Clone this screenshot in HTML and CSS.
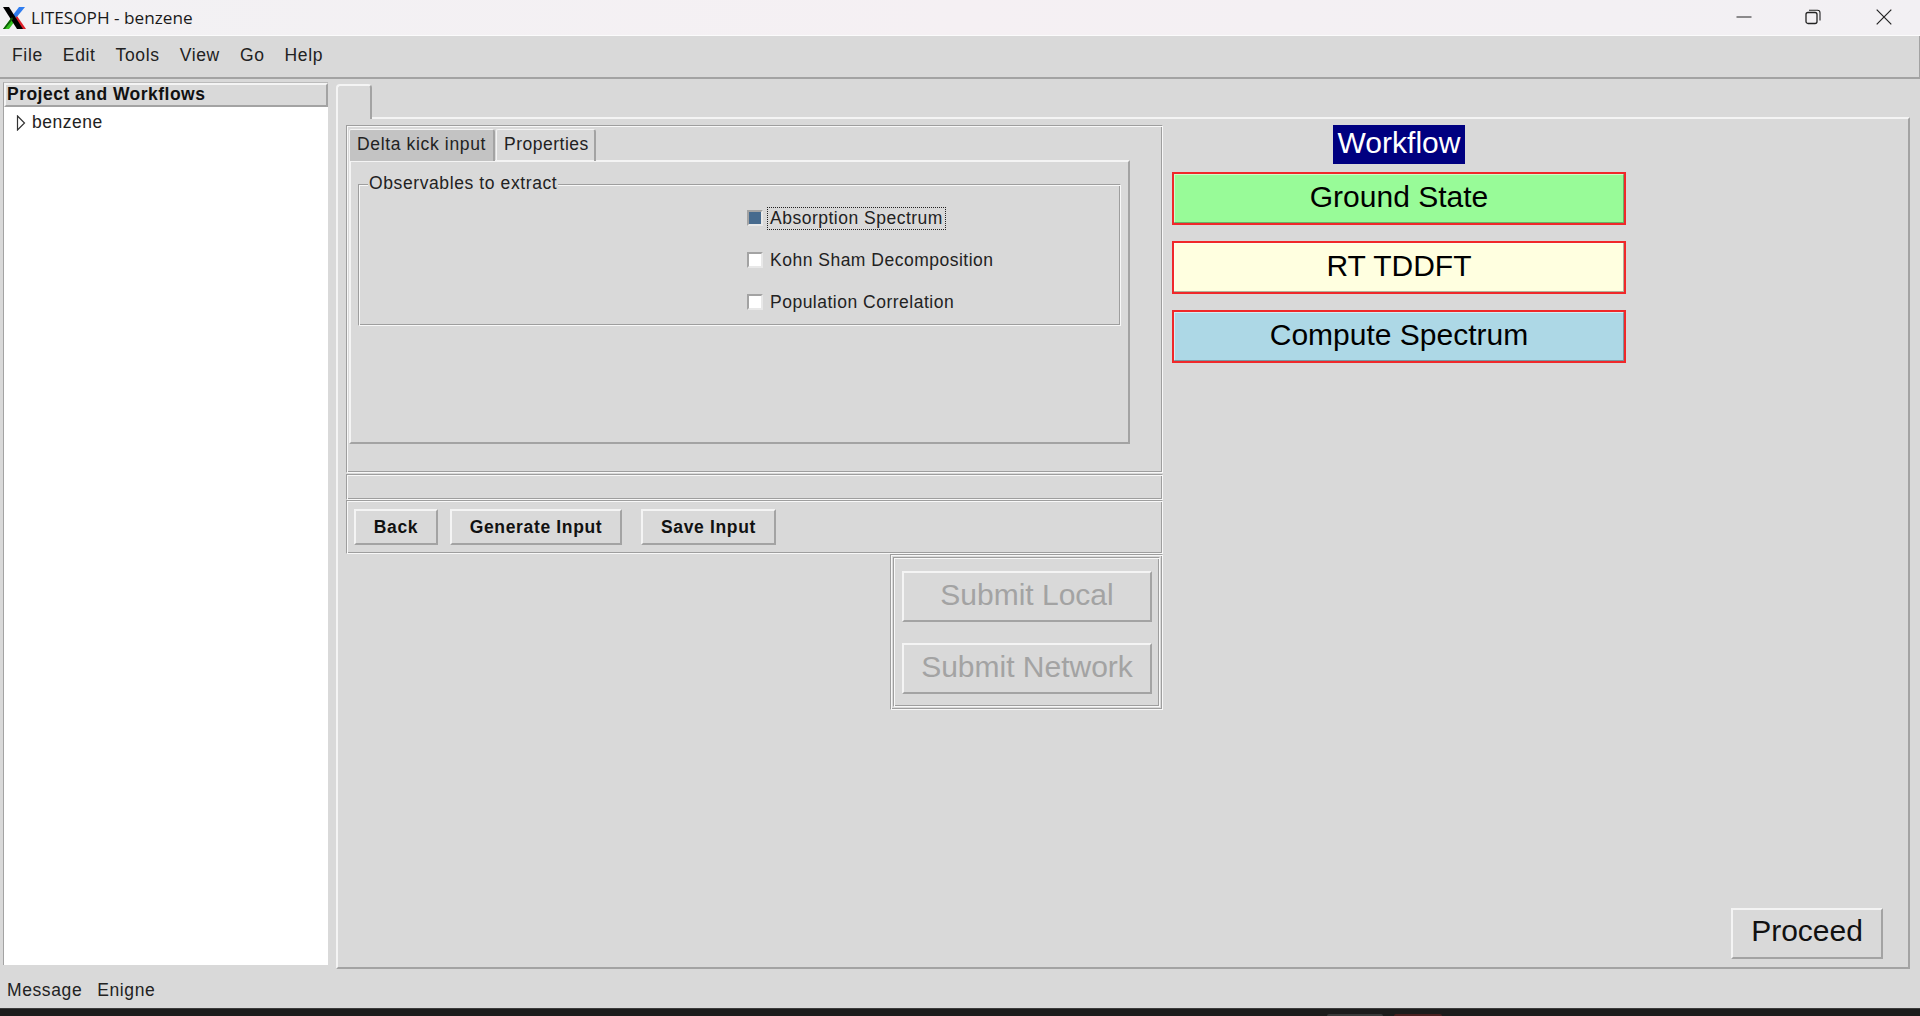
FILE: index.html
```html
<!DOCTYPE html>
<html lang="en">
<head>
<meta charset="utf-8">
<title>LITESOPH - benzene</title>
<link rel="stylesheet" href="styles.css">
</head>
<body>
<div class="app">
  <header class="titlebar">
    <svg class="logo" viewBox="0 0 24 24" width="24" height="24" aria-hidden="true">
      <polygon points="17,1 23,1 14,12 11,9" fill="#2f7df0"/>
      <polygon points="1,23 7,23 13,15 10,11" fill="#35c01f"/>
      <polygon points="20,23 24,23 15,10 13,13" fill="#e0202a"/>
      <polygon points="1,1 7,1 21,23 15,23" fill="#000"/>
      <polygon points="3,23 1,23 10,11 11,13" fill="#0d5a08"/>
    </svg>
    <span class="wintitle">LITESOPH - benzene</span>
    <div class="winctl">
      <svg class="ctl" viewBox="0 0 16 16" width="16" height="16"><path d="M0.5 8H15.5" stroke="#222" fill="none"/></svg>
      <svg class="ctl" viewBox="0 0 16 16" width="16" height="16"><rect x="1" y="3.5" width="11" height="11" rx="2" stroke="#222" stroke-width="1.3" fill="none"/><path d="M4 1.2H12.5A2.5 2.5 0 0 1 15 3.7V11.5" stroke="#222" stroke-width="1.1" fill="none"/></svg>
      <svg class="ctl" viewBox="0 0 16 16" width="16" height="16"><path d="M0.7 0.7L15.3 15.3M15.3 0.7L0.7 15.3" stroke="#222" stroke-width="1.2" fill="none"/></svg>
    </div>
  </header>

  <nav class="menubar">
    <span>File</span><span>Edit</span><span>Tools</span><span>View</span><span>Go</span><span>Help</span>
  </nav>

  <main class="workspace">
    <aside class="sidebar">
      <div class="sidehead">Project and Workflows</div>
      <div class="tree">
        <div class="treeitem">
          <svg viewBox="0 0 10 16" width="10" height="16" aria-hidden="true"><path d="M1.5 1L8.5 8L1.5 15Z" fill="none" stroke="#333" stroke-width="1.2"/></svg>
          <span>benzene</span>
        </div>
      </div>
    </aside>

    <section class="notebook">
      <div class="outertab"></div>
      <div class="outerpane">
        <div class="leftcol">
          <div class="groove form">
            <div class="tabs">
              <span class="tab off">Delta kick input</span>
              <span class="tab on">Properties</span>
            </div>
            <div class="tabpane">
              <fieldset class="observables">
                <legend>Observables to extract</legend>
                <div class="checks">
                  <div class="check"><i class="box checked"></i><span class="focus">Absorption Spectrum</span></div>
                  <div class="check"><i class="box"></i><span>Kohn Sham Decomposition</span></div>
                  <div class="check"><i class="box"></i><span>Population Correlation</span></div>
                </div>
              </fieldset>
            </div>
          </div>
          <div class="groove spacer"></div>
          <div class="groove actions">
            <button class="btn back">Back</button>
            <button class="btn gen">Generate Input</button>
            <button class="btn save">Save Input</button>
          </div>
          <div class="groove submitouter">
            <div class="groove submitinner">
              <button class="btn big" disabled>Submit Local</button>
              <button class="btn big" disabled>Submit Network</button>
            </div>
          </div>
        </div>

        <div class="flowcol">
          <div class="flowtitle">Workflow</div>
          <div class="flowbtn green">Ground State</div>
          <div class="flowbtn yellow">RT TDDFT</div>
          <div class="flowbtn blue">Compute Spectrum</div>
        </div>

        <div class="endcol">
          <button class="btn proceed">Proceed</button>
        </div>
      </div>
    </section>
  </main>

  <footer class="statusbar"><span>Message</span><span>Enigne</span></footer>
  <div class="taskbar"><i class="tb a"></i><i class="tb b"></i></div>
</div>
</body>
</html>
```

FILE: styles.css
```css
* { box-sizing: border-box; }
html, body { margin: 0; height: 100%; overflow: hidden; }
body { font-family: "Liberation Sans", Arial, sans-serif; font-size: 17.5px; color: #222; background: #d9d9d9; }
.app { height: 1016px; display: flex; flex-direction: column; }

.titlebar { height: 36px; flex: none; display: flex; align-items: center; background: linear-gradient(90deg, #f2f1f3 0%, #f5f0f3 50%, #f2f0f3 100%); border-bottom: 1px solid #fbfbfb; }
.logo { margin-left: 2px; flex: none; }
.wintitle { margin-left: 5px; font-family: "Open Sans", sans-serif; font-size: 17.2px; color: #1a1a1a; }
.winctl { margin-left: auto; display: flex; gap: 55px; margin-right: 28px; margin-bottom: 2px; }
.ctl:first-child { margin-right: -2px; }

.menubar { height: 43px; flex: none; display: flex; align-items: center; gap: 20px; padding: 0 0 2px 12px; border-bottom: 2px solid #a3a3a3; border-right: 1px solid #a3a3a3; letter-spacing: .65px; }

.workspace { flex: 1; min-height: 0; display: flex; padding-top: 2px; }
.sidebar { width: 325px; margin-left: 3px; display: flex; flex-direction: column; border-left: 1px solid #a3a3a3; border-top: 1px solid #bbb; height: 883px; margin-top: 1px; }
.sidehead { height: 24px; flex: none; font-weight: 700; line-height: 19px; padding-left: 1px; border: 2px solid; border-color: #f4f4f4 #a3a3a3 #a3a3a3 #f4f4f4; letter-spacing: .48px; color: #111; }
.tree { flex: 1; background: #fff; }
.treeitem { display: flex; align-items: center; gap: 6px; padding: 5px 0 0 12px; letter-spacing: .5px; }

.notebook { margin-left: 8px; width: 1574px; display: flex; flex-direction: column; height: 885px; margin-top: 3px; }
.outertab { width: 36px; height: 35px; flex: none; border: 2px solid; border-color: #f4f4f4 #a3a3a3 transparent #f4f4f4; border-radius: 4px 4px 0 0; margin-bottom: -2px; background: #d9d9d9; position: relative; z-index: 1; border-bottom: 0; }
.outerpane { flex: 1; min-height: 0; display: flex; border: 2px solid; border-color: #f4f4f4 #a3a3a3 #a3a3a3 #f4f4f4; padding: 6px 25px 8px 8px; }

.leftcol { width: 817px; flex: none; display: flex; flex-direction: column; }
.groove { border: 1px solid; border-color: #9e9e9e #f8f8f8 #f8f8f8 #9e9e9e; box-shadow: inset 1px 1px 0 #f8f8f8, inset -1px -1px 0 #9e9e9e; }
.form { height: 348px; padding: 2px 32px 0 2px; flex: none; }
.tabs { display: flex; height: 33px; align-items: flex-end; }
.tab { height: 32px; line-height: 29px; border: 1px solid; border-color: #f4f4f4 #a3a3a3 transparent #f4f4f4; border-width: 1px 2px 0 1px; letter-spacing: .5px; border-radius: 2px 3px 0 0; }
.tab.off { width: 146px; padding-left: 7px; background: #c3c3c3; letter-spacing: .65px; }
.tab.on { width: 100px; padding-left: 7px; margin-left: 1px; }
.tabpane { height: 284px; border: 2px solid; border-color: #f4f4f4 #a3a3a3 #a3a3a3 #f4f4f4; padding: 13px 7px 0 7px; margin-top: -1px; }
.observables { margin: 0; height: 151px; padding: 0; border: 1px solid; border-color: #9e9e9e #f8f8f8 #f8f8f8 #9e9e9e; box-shadow: inset 1px 1px 0 #f8f8f8, inset -1px -1px 0 #9e9e9e; }
.observables legend { padding: 0 1px; margin-left: 9px; letter-spacing: .6px; line-height: 16px; height: 18px; background: #d9d9d9; }
.checks { padding: 15px 0 0 388px; display: flex; flex-direction: column; }
.check { flex: none; height: 42px; display: flex; align-items: flex-start; gap: 7px; letter-spacing: .5px; line-height: 17px; padding-top: 2px; }
.check:last-child { height: 24px; }
.check .focus { outline: 1px dotted #222; outline-offset: 2px; }
.box { width: 16px; height: 16px; flex: none; background: #fff; border: 2px solid; border-color: #a3a3a3 #e8e8e8 #e8e8e8 #a3a3a3; }
.box.checked { background: #476b8e; }

.spacer { height: 26px; flex: none; margin-top: 1px; }
.actions { height: 54px; flex: none; display: flex; align-items: center; padding-left: 7px; }
.btn { font: inherit; color: inherit; background: #d9d9d9; border: 2px solid; border-color: #f4f4f4 #a3a3a3 #a3a3a3 #f4f4f4; padding: 0; }
.actions .btn { height: 36px; font-weight: 700; letter-spacing: .65px; color: #111; }
.back { width: 84px; }
.gen { width: 172px; margin-left: 12px; }
.save { width: 135px; margin-left: 19px; }
.submitouter { width: 273px; height: 156px; flex: none; align-self: flex-end; padding: 2px; }
.submitinner { height: 100%; padding: 13px 8px 0 8px; display: flex; flex-direction: column; gap: 21px; }
.btn.big { height: 51px; width: 250px; font-size: 30px; flex: none; padding-bottom: 4px; }
.btn.big:disabled { color: #a3a3a3; }

.flowcol { width: 454px; flex: none; margin-left: 9px; display: flex; flex-direction: column; align-items: stretch; }
.flowtitle { align-self: center; height: 39px; width: 132px; background: #000080; color: #fff; font-size: 30px; text-align: center; line-height: 35px; margin-bottom: 8px; }
.flowbtn { height: 53px; margin-bottom: 16px; border: 2px solid #f0282a; font-size: 30px; line-height: 46px; text-align: center; color: #000; box-shadow: inset -1px -1px 0 rgba(0,0,0,.3), inset 1px 1px 0 rgba(255,255,255,.5); }
.green { background: #98fb98; }
.yellow { background: #ffffe0; }
.blue { background: #add8e6; }

.endcol { flex: 1; display: flex; align-items: flex-end; justify-content: flex-end; }
.btn.proceed { width: 152px; height: 51px; font-size: 30px; color: #111; padding-bottom: 5px; }

.statusbar { height: 40px; flex: none; display: flex; align-items: center; gap: 15px; padding: 5px 0 0 7px; letter-spacing: .6px; }
.taskbar { height: 8px; flex: none; background: #1c1c1c; border-top: 1px solid #3c3c3c; display: flex; align-items: flex-end; padding-left: 1327px; }
.tb { display: block; height: 2px; border-radius: 2px 2px 0 0; }
.tb.a { width: 56px; background: #3a3a3a; }
.tb.b { width: 48px; margin-left: 11px; background: #4a2020; }
```
